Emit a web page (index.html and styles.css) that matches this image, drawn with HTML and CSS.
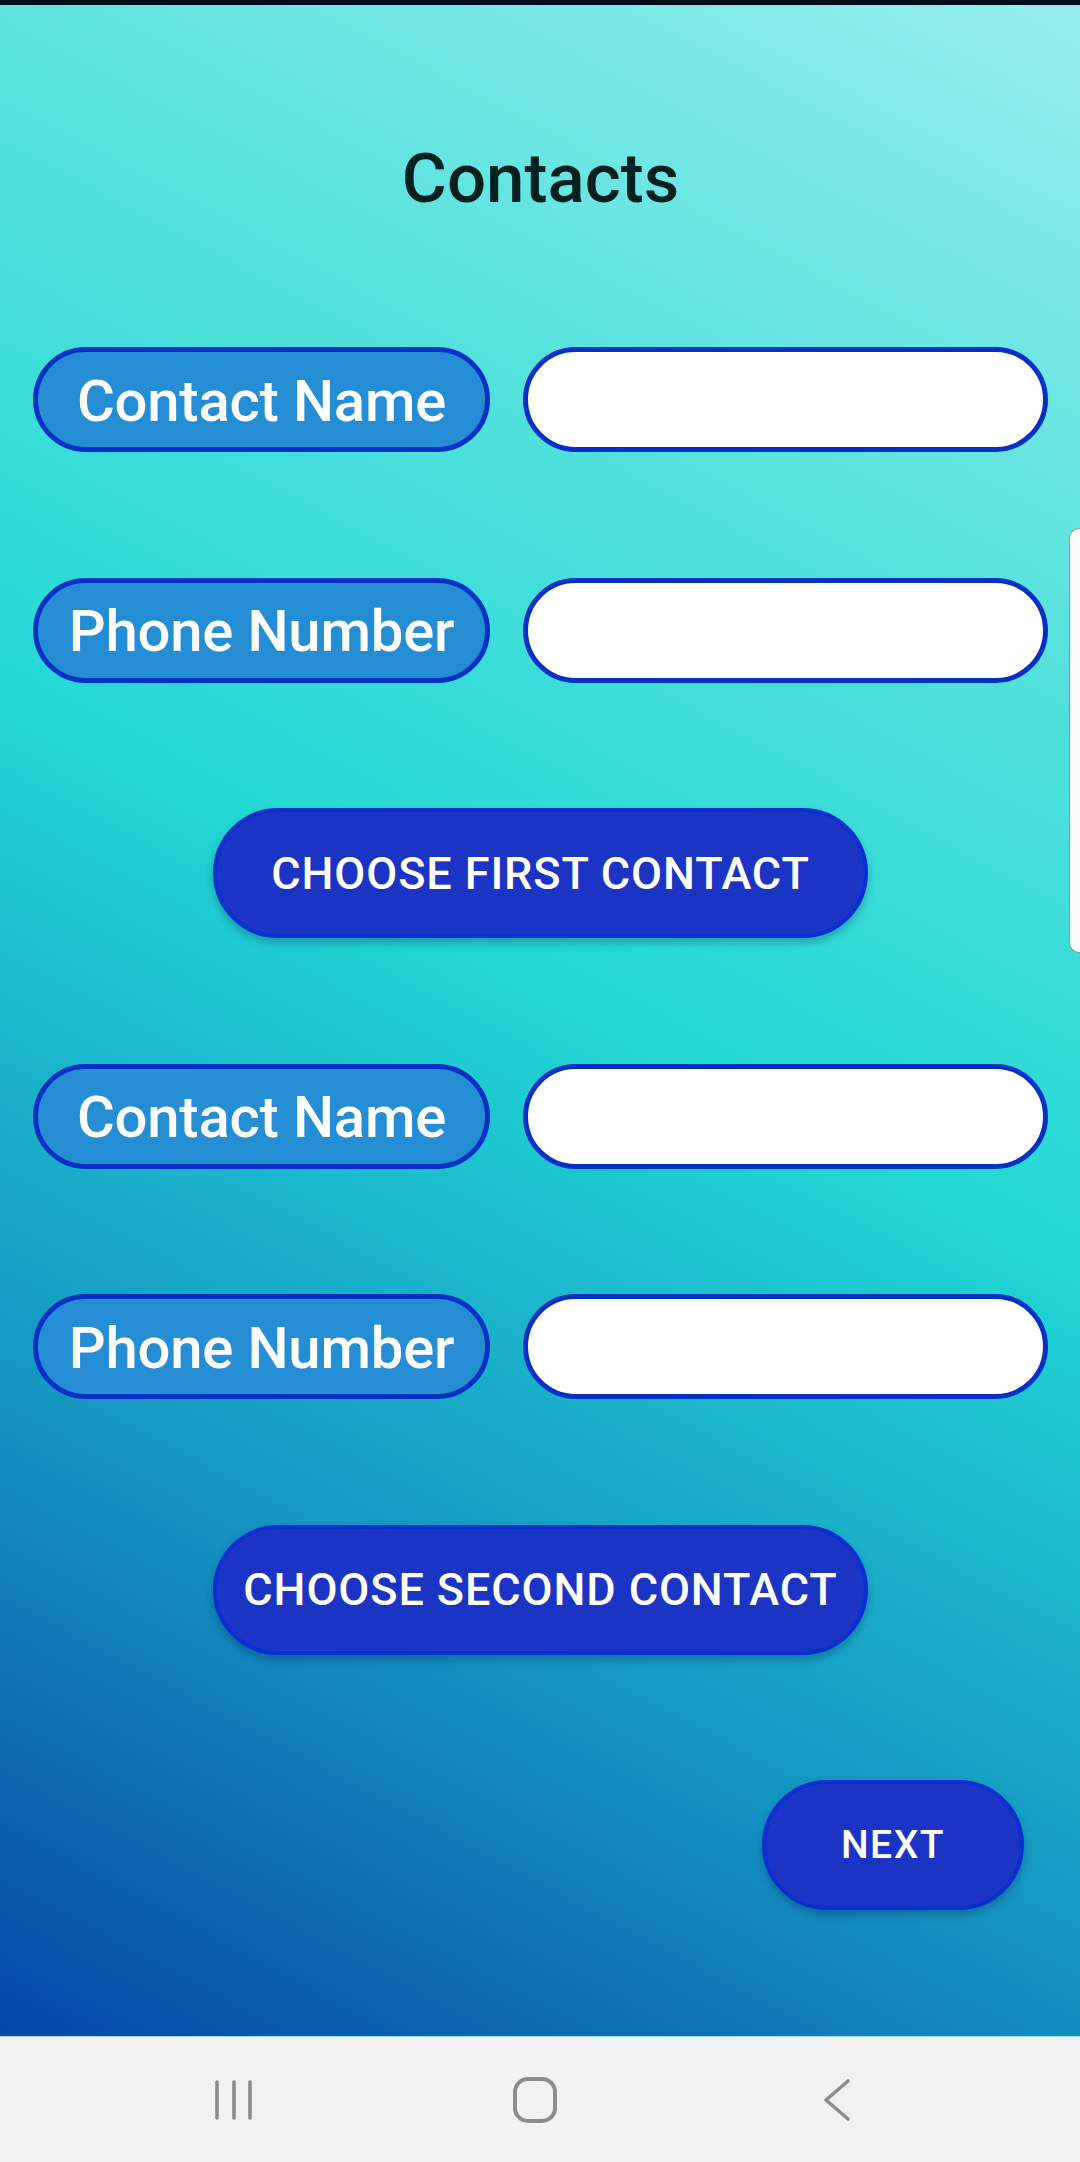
FILE: index.html
```html
<!DOCTYPE html>
<html lang="en">
<head>
<meta charset="utf-8">
<title>Contacts</title>
<link rel="stylesheet" href="styles.css">
</head>
<body>
<div class="screen">
  <div class="status-strip"></div>
  <main class="main">
    <h1 class="title">Contacts</h1>
    <div class="form">
      <div class="row">
        <div class="label">Contact Name</div>
        <div class="input"></div>
      </div>
      <div class="row">
        <div class="label">Phone Number</div>
        <div class="input"></div>
      </div>
      <div class="btn-row">
        <button class="btn btn-wide">Choose First Contact</button>
      </div>
      <div class="row">
        <div class="label">Contact Name</div>
        <div class="input"></div>
      </div>
      <div class="row">
        <div class="label">Phone Number</div>
        <div class="input"></div>
      </div>
      <div class="btn-row">
        <button class="btn btn-wide btn-second">Choose Second Contact</button>
      </div>
      <div class="btn-row btn-row-end">
        <button class="btn btn-next">Next</button>
      </div>
    </div>
    <div class="edge-handle"></div>
  </main>
  <nav class="navbar">
    <div class="nav-cell">
      <svg width="44" height="44" viewBox="0 0 44 44"><g stroke="#8c8c8c" stroke-width="3.6" stroke-linecap="round" fill="none"><line x1="6" y1="4" x2="6" y2="40"/><line x1="23" y1="4" x2="23" y2="40"/><line x1="39" y1="4" x2="39" y2="40"/></g></svg>
    </div>
    <div class="nav-cell">
      <svg width="46" height="46" viewBox="0 0 46 46"><rect x="3" y="2" width="40" height="42" rx="13" ry="13" stroke="#8c8c8c" stroke-width="4" fill="none"/></svg>
    </div>
    <div class="nav-cell">
      <svg width="44" height="44" viewBox="0 0 44 44"><polyline points="33,3 11,22 33,41" stroke="#8c8c8c" stroke-width="3.6" stroke-linecap="round" stroke-linejoin="round" fill="none"/></svg>
    </div>
  </nav>
</div>
</body>
</html>
```

FILE: styles.css
```css
* { box-sizing: border-box; }
html, body { margin: 0; padding: 0; }
body {
  width: 1080px;
  height: 2162px;
  overflow: hidden;
  font-family: Roboto, "Noto Sans", "Liberation Sans", sans-serif;
}
.screen {
  width: 1080px;
  height: 2162px;
  display: flex;
  flex-direction: column;
}
.status-strip {
  height: 5px;
  background: #010d1c;
  flex: none;
}
.main {
  position: relative;
  flex: none;
  height: 2031px;
  background: linear-gradient(28deg, #0347a8 0%, #0d69b0 11%, #138cc0 22%, #22d8d4 52%, #5de3df 78%, #96eeec 100%);
  padding: 0 32px 0 33px;
}
.title {
  margin: 134px 0 0 0;
  text-align: center;
  font-size: 69px;
  line-height: 80px;
  font-weight: 500;
  color: #04201f;
}
.form {
  margin-top: 128px;
  display: flex;
  flex-direction: column;
  gap: 125.5px;
}
.row {
  display: flex;
  gap: 33px;
  height: 105px;
}
.label {
  width: 457px;
  flex: none;
  border: 5px solid #0530c6;
  background: #248dd4;
  border-radius: 53px;
  color: #ffffff;
  font-size: 58px;
  letter-spacing: -0.2px;
  font-weight: 500;
  display: flex;
  align-items: center;
  justify-content: center;
  padding-top: 2px;
}
.input {
  flex: 1;
  border: 5px solid #0530c6;
  background: #ffffff;
  border-radius: 53px;
}
.btn-row {
  display: flex;
  justify-content: center;
}
.btn-row-end {
  justify-content: flex-end;
  padding-right: 24px;
}
.btn {
  height: 130px;
  border: 4px solid #0a2fd0;
  background: #1b34c4;
  color: #ffffff;
  border-radius: 65px;
  font-family: Roboto, "Noto Sans", sans-serif;
  text-transform: uppercase;
  font-weight: 500;
  box-shadow: 0 5px 9px rgba(0, 20, 60, 0.28);
  padding: 0;
  display: flex;
  align-items: center;
  justify-content: center;
}
.btn-wide {
  width: 655px;
  font-size: 45px;
  letter-spacing: 0.9px;
}
.btn-next {
  width: 262px;
  font-size: 39px;
  letter-spacing: 1.5px;
}
.edge-handle {
  position: absolute;
  right: 0;
  top: 523px;
  width: 11px;
  height: 425px;
  background: #fbfbfb;
  border: 1.5px solid #8e9a9a;
  border-right: none;
  border-radius: 10px 0 0 10px;
}
.navbar {
  flex: 1;
  background: #f2f2f2;
  display: flex;
  justify-content: center;
  align-items: center;
  padding-right: 11px;
  border-top: 1px solid #9fdcea;
}
.nav-cell {
  width: 302px;
  display: flex;
  justify-content: center;
  align-items: center;
}
```
